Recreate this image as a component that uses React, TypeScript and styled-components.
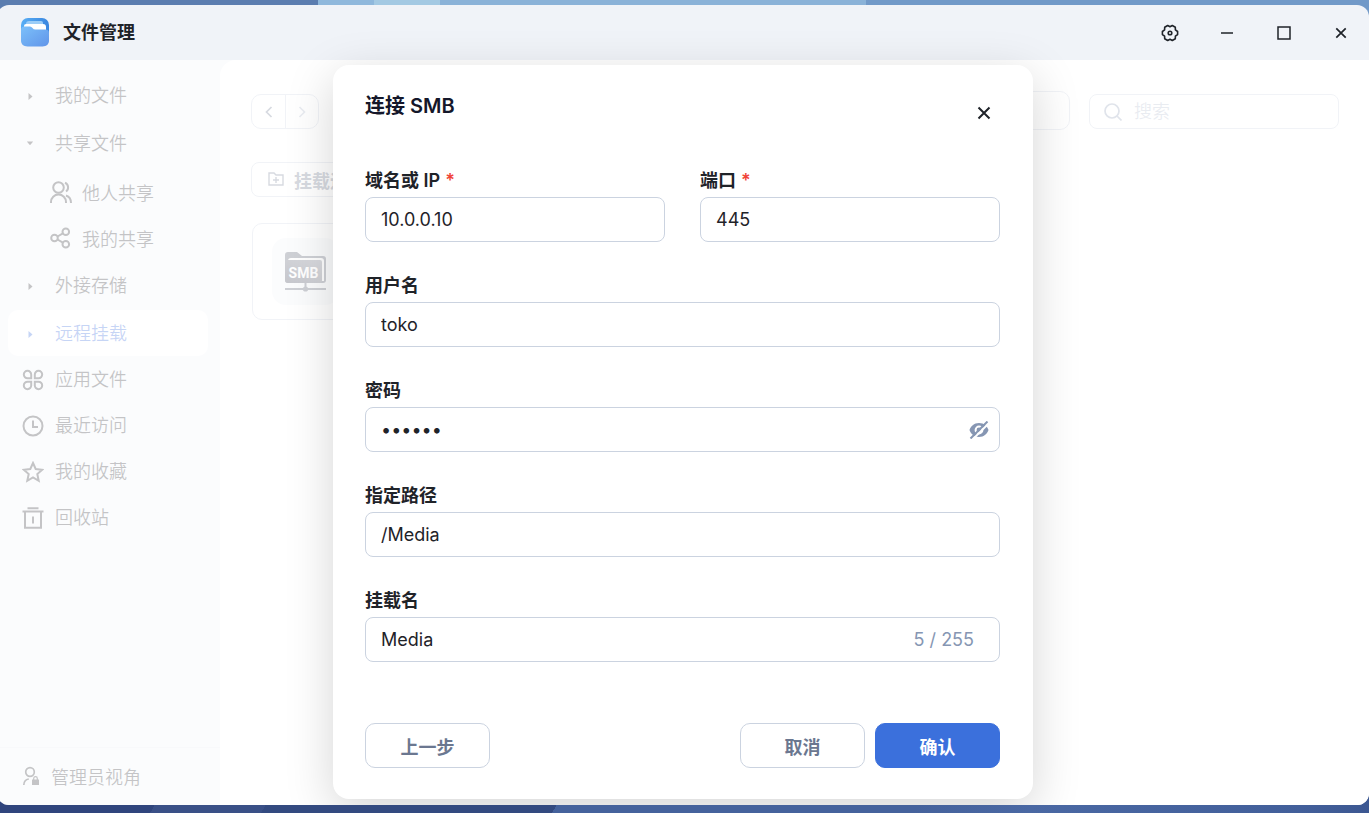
import React, { useState } from 'react';
import styled, { createGlobalStyle, css } from 'styled-components';

const GlobalStyle = createGlobalStyle`
  * { box-sizing: border-box; }
  body {
    margin: 0;
    overflow: hidden;
    font-family: Inter, "Noto Sans CJK SC", sans-serif;
    font-size: 18px;
    color: #1f2329;
  }
  button, input { font: inherit; color: inherit; }
  svg { display: block; flex: none; }
`;

const Desktop = styled.div`
  display: flex;
  min-height: 100vh;
  padding: 5px 0 8px;
  background:
    linear-gradient(90deg, #5b7db0 318px, #8fb8dc 318px 374px, #a3c9e3 374px 440px, #8ab2d8 440px 866px, #7199c8 866px) top / 100% 40px no-repeat,
    linear-gradient(120deg, #30457d 140px, #3a5087 140px 236px, #334a80 236px 488px, #45629c 488px 800px, #4a68a3 900px, #425f9a 1136px, #3c5791) bottom / 100% 20px no-repeat,
    #6488bb;
`;

const Window = styled.main`
  display: flex;
  flex: 1;
  flex-direction: column;
  margin-left: -3px;
  border-radius: 12px;
  overflow: hidden;
  background: #f0f3f8;
`;

const TitleBar = styled.header`
  display: flex;
  align-items: center;
  height: 55px;
  padding: 0 10px 0 24px;
`;

const AppTitle = styled.h1`
  flex: 1;
  margin: 0 0 0 14px;
  font-size: 18px;
  line-height: 28px;
  font-weight: 700;
`;

const WindowControls = styled.div`
  display: flex;
  gap: 21px;
`;

const IconButton = styled.button`
  display: grid;
  place-items: center;
  width: 36px;
  height: 36px;
  padding: 0;
  border: 0;
  background: none;
  cursor: pointer;
`;

const Body = styled.div`
  position: relative;
  display: flex;
  flex: 1;
`;

const Sidebar = styled.aside`
  display: flex;
  flex-direction: column;
  width: 223px;
  flex: none;
  color: #14171c;
`;

const Nav = styled.nav`
  flex: 1;
  padding: 12px 12px 0 11px;
`;

const NavList = styled.ul`
  margin: 0;
  padding: 0;
  list-style: none;
`;

const NavLink = styled.a<{ $kind?: 'group' | 'child'; $active?: boolean }>`
  display: flex;
  align-items: center;
  gap: 11px;
  height: 46px;
  padding: 0 0 2px 14px;
  border-radius: 10px;
  color: inherit;
  font-weight: 350;
  text-decoration: none;
  svg { margin-top: 3px; }
  ${(p) => p.$kind === 'child' && css`
    gap: 10px;
    padding: 0 0 0 42px;
    svg { margin-top: 0; }
  `}
  ${(p) => p.$kind === 'group' && css`margin-bottom: 2px; background: #f0f1f5;`}
  ${(p) => p.$active && css`margin-bottom: 0; background: #fff; color: #1d58d8;`}
`;

const ChildList = styled(NavList)`
  padding: 1px 0;
`;

const AdminLink = styled.a`
  display: flex;
  align-items: center;
  gap: 11px;
  height: 58px;
  padding: 0 0 2px 25px;
  border-top: 1px solid #e2e6ee;
  color: inherit;
  font-weight: 350;
  text-decoration: none;
`;

const Content = styled.section`
  flex: 1;
  min-width: 0;
  padding: 31px 30px 0 31px;
  border-radius: 16px 0 0 0;
  background: #fff;
`;

const Toolbar = styled.div`
  display: flex;
  align-items: center;
  gap: 19px;
  height: 41px;
`;

const History = styled.div`
  display: flex;
  border: 1px solid #c5cddd;
  border-radius: 10px;
`;

const HistoryButton = styled(IconButton)`
  width: 33px;
  height: 33px;
  color: #5f6b85;
  & + & { border-left: 1px solid #c5cddd; }
  &:disabled { color: #a9b3c8; }
`;

const PathInput = styled.input`
  flex: 1;
  align-self: flex-start;
  min-width: 0;
  height: 39px;
  border: 1px solid #c5cddd;
  border-radius: 10px;
  background: #fff;
`;

const Search = styled.label`
  display: flex;
  align-items: center;
  gap: 12px;
  width: 250px;
  height: 35px;
  padding: 0 14px;
  border: 1px solid #c5cddd;
  border-radius: 8px;
  color: #8492ae;
  input {
    min-width: 0;
    flex: 1;
    padding: 0;
    border: 0;
    outline: 0;
    background: none;
    font-weight: 350;
  }
  input::placeholder { color: #a9b3c8; opacity: 1; }
`;

const MountButton = styled.button`
  display: flex;
  align-items: center;
  gap: 10px;
  height: 35px;
  margin-top: 30px;
  padding: 0 16px;
  border: 1px solid #c5cddd;
  border-radius: 8px;
  background: #fff;
  color: #5f6b85;
  font-weight: 700;
`;

const MountCard = styled.button`
  display: flex;
  align-items: center;
  width: 340px;
  height: 97px;
  margin: 26px 0 0 1px;
  padding: 0 19px;
  border: 1px solid #c5cddd;
  border-radius: 10px;
  background: #fff;
`;

const MountIcon = styled.span`
  display: grid;
  place-items: center;
  width: 67px;
  height: 67px;
  border-radius: 14px;
  background: #eff1f7;
`;

const Backdrop = styled.div`
  position: absolute;
  inset: 0;
  display: grid;
  place-items: center;
  padding-bottom: 1px;
  background: rgba(255, 255, 255, 0.75);
`;

const Dialog = styled.form`
  width: 700px;
  max-width: 100%;
  padding: 25px 33px 31px 32px;
  border-radius: 16px;
  background: #fff;
  box-shadow: 0 12px 48px rgba(0, 0, 0, 0.17);
`;

const DialogHeader = styled.div`
  display: flex;
  justify-content: space-between;
  align-items: center;
  height: 45px;
  margin-bottom: 32px;
`;

const DialogTitle = styled.h2`
  align-self: flex-start;
  margin: 0;
  font-size: 20px;
  line-height: 32px;
  font-weight: 600;
  color: #14172a;
`;

const CloseButton = styled(IconButton)`
  width: 32px;
  height: 32px;
`;

const Row = styled.div`
  display: flex;
  gap: 35px;
`;

const FieldBox = styled.div`
  flex: 1;
  min-width: 0;
  margin-bottom: 30px;
`;

const Label = styled.label`
  display: block;
  height: 30px;
  line-height: 28px;
  font-weight: 600;
`;

const Required = styled.span`
  margin-left: 5px;
  color: #f04438;
`;

const InputFrame = styled.div`
  display: flex;
  align-items: center;
  height: 45px;
  padding: 0 10px 0 15px;
  border: 1px solid #cbd3e0;
  border-radius: 8px;
`;

const TextInput = styled.input`
  flex: 1;
  min-width: 0;
  height: 43px;
  padding: 0;
  border: 0;
  outline: 0;
  background: none;
`;

const Counter = styled.span`
  padding-right: 15px;
  color: #8696b3;
`;

const EyeButton = styled(IconButton)`
  width: 20px;
  height: 32px;
  color: #8696b3;
`;

const Actions = styled.div`
  display: flex;
  gap: 10px;
  padding-top: 31px;
`;

const Button = styled.button<{ $primary?: boolean }>`
  width: 125px;
  height: 45px;
  padding: 0;
  border: 1px solid ${(p) => (p.$primary ? '#3b70dc' : '#cbd3e0')};
  border-radius: 10px;
  background: ${(p) => (p.$primary ? '#3b70dc' : '#fff')};
  color: ${(p) => (p.$primary ? '#fff' : '#6b7790')};
  font-weight: 600;
  cursor: pointer;
  &:first-child { margin-right: auto; }
`;

const stroke = { fill: 'none', stroke: 'currentColor', strokeWidth: 2 } as const;

const Logo = () => (
  <svg width="28" height="30" viewBox="0 0 28 30" aria-hidden="true">
    <defs>
      <linearGradient id="logoBack" x1="0" y1="0" x2="1" y2="0">
        <stop stopColor="#58aef5" />
        <stop offset="1" stopColor="#3a86df" />
      </linearGradient>
      <linearGradient id="logoFront" x1="0" y1="0" x2="1" y2="1">
        <stop stopColor="#7cc0fa" />
        <stop offset="1" stopColor="#6094e9" />
      </linearGradient>
    </defs>
    <rect width="28" height="28" rx="7" fill="url(#logoBack)" />
    <path d="M5 6q0-3 3-3h12q2 0 2 2v3H5z" fill="#9ccdf7" />
    <path d="M3 8q0-2 2-2h17q3 0 3 3v4H3z" fill="#fff" />
    <path d="M0 12q0-3.500 3.500-3.500h5.500q1.500 0 2.500 1.500t3 1.500h10q3.500 0 3.500 3.500v7q0 6.500-6.500 6.500h-15Q0 28.500 0 22z" fill="url(#logoFront)" />
  </svg>
);

const SettingsIcon = () => (
  <svg width="18" height="18" viewBox="0 0 18 18" aria-hidden="true">
    <path
      {...stroke}
      strokeWidth="1.600"
      strokeLinejoin="round"
      d="M16.600 7.500v3L14.400 12.100l-.1 2.600-3 1.800L9 15.200l-2.300 1.300-3-1.800-.1-2.600L1.400 10.500v-3L3.600 5.900l.1-2.600 3-1.800L9 2.800l2.300-1.300 3 1.800.1 2.600z"
    />
    <circle {...stroke} strokeWidth="1.600" cx="9" cy="9" r="1.800" />
  </svg>
);

const MinimizeIcon = () => (
  <svg width="12" height="12" viewBox="0 0 12 12" aria-hidden="true"><path {...stroke} strokeWidth="1.500" d="M0 6h12" /></svg>
);

const MaximizeIcon = () => (
  <svg width="14" height="14" viewBox="0 0 14 14" aria-hidden="true"><path {...stroke} strokeWidth="1.500" d="M1 1h12v12H1z" /></svg>
);

const CrossIcon = ({ size }: { size: number }) => (
  <svg width={size} height={size} viewBox="0 0 14 14" aria-hidden="true"><path {...stroke} d="m1.500 1.500 11 11m0-11-11 11" /></svg>
);

const CaretIcon = ({ open }: { open?: boolean }) => (
  <svg width="22" height="22" viewBox="0 0 22 22" aria-hidden="true">
    <path fill="currentColor" d={open ? 'M4.800 8.500h6.400L8 12.300z' : 'M6.500 8v7L10.500 11.500z'} />
  </svg>
);

const PeopleIcon = () => (
  <svg width="22" height="22" viewBox="0 0 22 22" aria-hidden="true">
    <path {...stroke} d="M1 22v-1a7.500 7.500 0 0 1 15 0v1M15 1.800a5 5 0 0 1 1 8.700M16 14.500c3 1 5 3.500 5 7.500" />
    <circle {...stroke} cx="8.500" cy="6.500" r="5.300" />
  </svg>
);

const ShareIcon = () => (
  <svg width="22" height="22" viewBox="0 0 22 22" aria-hidden="true">
    <circle {...stroke} cx="4.500" cy="11" r="3.300" />
    <circle {...stroke} cx="15.800" cy="4.800" r="3.300" />
    <circle {...stroke} cx="15.800" cy="17.200" r="3.300" />
    <path {...stroke} d="m7.500 9.500 5.400-3.100M7.500 12.500l5.400 3.100" />
  </svg>
);

const AppsIcon = () => (
  <svg width="22" height="22" viewBox="0 0 22 22" aria-hidden="true">
    <path {...stroke} d="M9.200 9.200H5.600a3.700 3.700 0 1 1 3.600-3.600zM12.800 9.200h3.600a3.700 3.700 0 1 0-3.600-3.600zM9.200 12.800H5.600a3.700 3.700 0 1 0 3.600 3.600zM12.800 12.800h3.600a3.700 3.700 0 1 1-3.600 3.600z" />
  </svg>
);

const ClockIcon = () => (
  <svg width="22" height="22" viewBox="0 0 22 22" aria-hidden="true">
    <circle {...stroke} cx="11" cy="11" r="9.500" />
    <path {...stroke} d="M11 5.500V12h5" />
  </svg>
);

const StarIcon = () => (
  <svg width="22" height="22" viewBox="0 0 22 22" aria-hidden="true">
    <path {...stroke} d="m11 2 2.700 6 6.500.7-4.900 4.300 1.400 6.800-5.700-3.400-5.700 3.400 1.400-6.800L1.800 8.700 8.300 8z" />
  </svg>
);

const TrashIcon = () => (
  <svg width="22" height="22" viewBox="0 0 22 22" aria-hidden="true">
    <path {...stroke} d="M5.500 1.200h11M.5 4.500h21M3 4.500v16.300h16V4.500M11 9.500v7" />
  </svg>
);

const AdminIcon = () => (
  <svg width="18" height="20" viewBox="0 0 18 20" aria-hidden="true">
    <circle {...stroke} strokeWidth="1.700" cx="8" cy="6" r="4.300" />
    <path {...stroke} strokeWidth="1.700" d="M1.800 19c0-3.500 2-5.500 5-6" />
    <path fill="currentColor" d="M10 13.500h7v5.500h-7z" />
    <path {...stroke} strokeWidth="1.200" d="M11.700 14v-1.500a1.800 1.800 0 0 1 3.600 0V14" />
  </svg>
);

const ChevronIcon = ({ next }: { next?: boolean }) => (
  <svg width="12" height="12" viewBox="0 0 12 12" aria-hidden="true">
    <path {...stroke} strokeWidth="1.700" d={next ? 'm3.500 1 5 5-5 5' : 'm8.500 1-5 5 5 5'} />
  </svg>
);

const SearchIcon = () => (
  <svg width="18" height="18" viewBox="0 0 18 18" aria-hidden="true">
    <circle {...stroke} strokeWidth="1.700" cx="8" cy="8" r="7" />
    <path {...stroke} strokeWidth="1.700" d="m13 13 4.500 4.500" />
  </svg>
);

const FolderAddIcon = () => (
  <svg width="16" height="16" viewBox="0 0 16 16" aria-hidden="true">
    <path {...stroke} strokeWidth="1.400" d="M1 1h5l2 2h7v10H1zM8 5v6M5 8h6" />
  </svg>
);

const SmbIcon = () => (
  <svg width="42" height="40" viewBox="0 0 42 40" aria-hidden="true">
    <defs>
      <linearGradient id="smbFront" x1="1" y1="0" x2="0" y2="1">
        <stop stopColor="#6a6f80" />
        <stop offset="1" stopColor="#1c2036" />
      </linearGradient>
    </defs>
    <path d="M0 3q0-3 3-3h9l5 4h21q3 0 3 3v21q0 3-3 3H3q-3 0-3-3z" fill="#3d4357" />
    <path d="M3 9q0-3 3-3h30q3 0 3 3v20H3z" fill="#fff" />
    <path d="M0 10q0-2 2-2h33q2 0 2 2v18q0 3-3 3H3q-3 0-3-3z" fill="url(#smbFront)" />
    <path d="M0 37h41M20.500 31v6" stroke="#3d4357" strokeWidth="2" />
    <circle cx="20.500" cy="37" r="2.600" fill="#3d4357" />
    <text x="18.500" y="26" textAnchor="middle" fontFamily="Roboto, sans-serif" fontSize="14" fontWeight="700" fill="#fff">SMB</text>
  </svg>
);

const EyeOffIcon = () => (
  <svg width="20" height="18" viewBox="0 0 20 18" aria-hidden="true">
    <path fill="currentColor" fillRule="evenodd" d="M10 2c5 0 8.500 3.500 9.500 7-1 3.500-4.500 7-9.500 7S1.500 12.500.5 9C1.500 5.500 5 2 10 2zm0 2.600a4.400 4.400 0 1 0 0 8.800 4.400 4.400 0 0 0 0-8.800zm0 2a2.400 2.400 0 1 1 0 4.800 2.400 2.400 0 0 1 0-4.800z" />
    <path d="M3.500 18.500 20.500 1.500" stroke="#fff" strokeWidth="2" />
    <path d="M1.500 17.500 18.500.5" stroke="currentColor" strokeWidth="2" />
  </svg>
);

interface FieldProps {
  id: string;
  label: string;
  value: string;
  type?: string;
  required?: boolean;
  children?: React.ReactNode;
}

const Field = ({ id, label, value, type = 'text', required, children }: FieldProps) => (
  <FieldBox>
    <Label htmlFor={id}>
      {label}
      {required && <Required>*</Required>}
    </Label>
    <InputFrame>
      <TextInput id={id} type={type} defaultValue={value} required={required} />
      {children}
    </InputFrame>
  </FieldBox>
);

export default function App() {
  const [visible, setVisible] = useState(false);
  return (
    <>
      <GlobalStyle />
      <Desktop>
        <Window>
          <TitleBar>
            <Logo />
            <AppTitle>文件管理</AppTitle>
            <WindowControls>
              <IconButton aria-label="设置"><SettingsIcon /></IconButton>
              <IconButton aria-label="最小化"><MinimizeIcon /></IconButton>
              <IconButton aria-label="最大化"><MaximizeIcon /></IconButton>
              <IconButton aria-label="关闭"><CrossIcon size={12} /></IconButton>
            </WindowControls>
          </TitleBar>
          <Body>
            <Sidebar>
              <Nav>
                <NavList>
                  <li><NavLink href="#mine" $kind="group"><CaretIcon />我的文件</NavLink></li>
                  <li>
                    <NavLink href="#shared" $kind="group"><CaretIcon open />共享文件</NavLink>
                    <ChildList>
                      <li><NavLink href="#from-others" $kind="child"><PeopleIcon />他人共享</NavLink></li>
                      <li><NavLink href="#my-shares" $kind="child"><ShareIcon />我的共享</NavLink></li>
                    </ChildList>
                  </li>
                  <li><NavLink href="#external" $kind="group"><CaretIcon />外接存储</NavLink></li>
                  <li><NavLink href="#remote" $kind="group" $active><CaretIcon />远程挂载</NavLink></li>
                  <li><NavLink href="#apps"><AppsIcon />应用文件</NavLink></li>
                  <li><NavLink href="#recent"><ClockIcon />最近访问</NavLink></li>
                  <li><NavLink href="#favorites"><StarIcon />我的收藏</NavLink></li>
                  <li><NavLink href="#trash"><TrashIcon />回收站</NavLink></li>
                </NavList>
              </Nav>
              <AdminLink href="#admin"><AdminIcon />管理员视角</AdminLink>
            </Sidebar>
            <Content>
              <Toolbar>
                <History>
                  <HistoryButton aria-label="后退"><ChevronIcon /></HistoryButton>
                  <HistoryButton aria-label="前进" disabled><ChevronIcon next /></HistoryButton>
                </History>
                <PathInput aria-label="路径" />
                <Search>
                  <SearchIcon />
                  <input type="search" placeholder="搜索" />
                </Search>
              </Toolbar>
              <MountButton><FolderAddIcon />挂载远程</MountButton>
              <MountCard aria-label="SMB"><MountIcon><SmbIcon /></MountIcon></MountCard>
            </Content>
            <Backdrop>
              <Dialog role="dialog" aria-labelledby="dialog-title" onSubmit={(e) => e.preventDefault()}>
                <DialogHeader>
                  <DialogTitle id="dialog-title">连接 SMB</DialogTitle>
                  <CloseButton type="button" aria-label="关闭"><CrossIcon size={14} /></CloseButton>
                </DialogHeader>
                <Row>
                  <Field id="host" label="域名或 IP" value="10.0.0.10" required />
                  <Field id="port" label="端口" value="445" required />
                </Row>
                <Field id="user" label="用户名" value="toko" />
                <Field id="password" label="密码" value="secret" type={visible ? 'text' : 'password'}>
                  <EyeButton type="button" aria-label="显示密码" onClick={() => setVisible(!visible)}><EyeOffIcon /></EyeButton>
                </Field>
                <Field id="path" label="指定路径" value="/Media" />
                <Field id="name" label="挂载名" value="Media"><Counter>5 / 255</Counter></Field>
                <Actions>
                  <Button type="button">上一步</Button>
                  <Button type="button">取消</Button>
                  <Button type="submit" $primary>确认</Button>
                </Actions>
              </Dialog>
            </Backdrop>
          </Body>
        </Window>
      </Desktop>
    </>
  );
}
